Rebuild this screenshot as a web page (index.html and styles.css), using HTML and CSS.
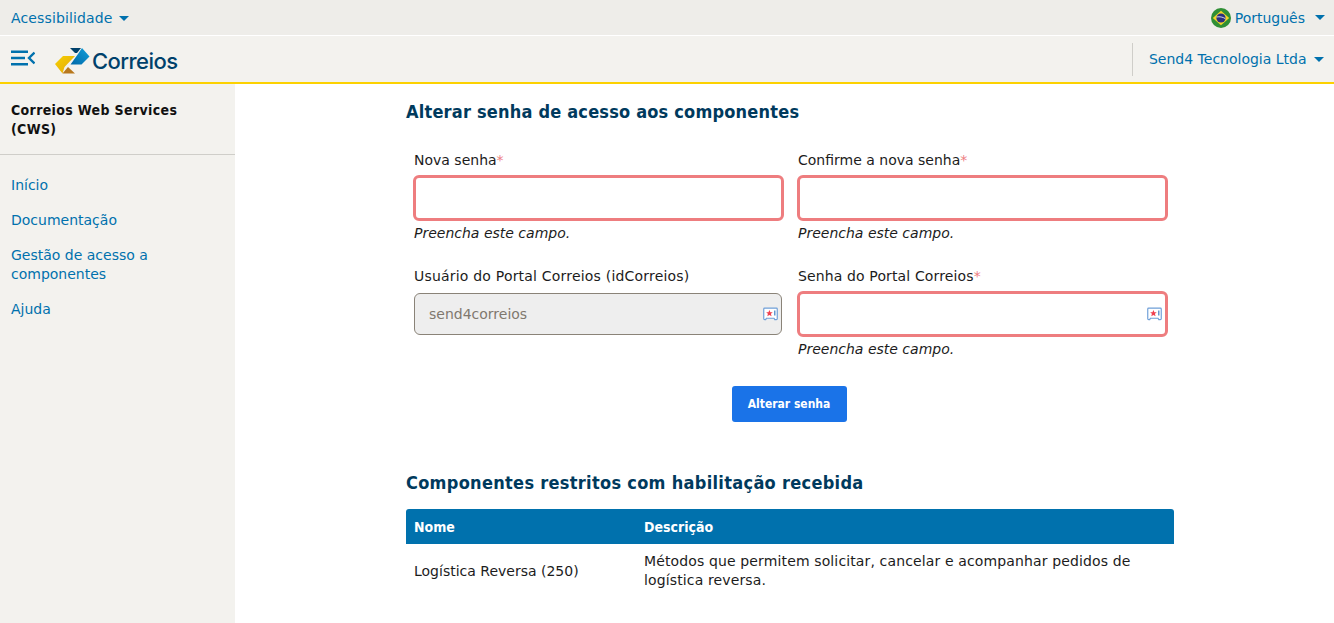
FILE: index.html
```html
<!DOCTYPE html>
<html lang="pt-BR">
<head>
<meta charset="utf-8">
<title>Correios Web Services</title>
<link rel="stylesheet" href="styles.css">
</head>
<body>
<div class="topbar">
  <a class="link top-link">Acessibilidade <span class="caret"></span></a>
  <a class="link lang">
    <svg class="flag" width="20" height="20" viewBox="0 0 20 20"><circle cx="10" cy="10" r="10" fill="#2f8f35"/><path d="M10 2.800 18.200 10 10 17.200 1.800 10z" fill="#f5d327"/><circle cx="10" cy="10" r="4.600" fill="#2b2f7e"/><path d="M5.600 9c3-.6 6.200 0 8.700 1.600" stroke="#fff" stroke-width=".8" fill="none"/></svg>
    Português <span class="caret caret-far"></span>
  </a>
</div>
<header class="header">
  <svg class="menu" width="24" height="16" viewBox="0 0 24 16"><g fill="none" stroke="#0071ad" stroke-width="2.400"><path d="M0 1.800H17M0 8H14M0 14.200H17"/><path d="M23.500 2.500 18 8l5.500 5.500"/></g></svg>
  <svg class="mark" width="35" height="28" viewBox="0 0 35 28">
    <defs>
      <linearGradient id="gy" x1="0" y1="0" x2="1" y2="1"><stop offset="0" stop-color="#f6d000"/><stop offset="1" stop-color="#e3a70f"/></linearGradient>
      <linearGradient id="gb" x1="1" y1="0" x2="0" y2="1"><stop offset="0" stop-color="#12a0da"/><stop offset="1" stop-color="#0068a8"/></linearGradient>
    </defs>
    <path d="M15 1H26L22 6H20z" fill="#00416b"/>
    <path d="M27 1 34.500 9.500 26.500 17.500H15.500L23 7z" fill="url(#gb)"/>
    <path d="M0 17 8 9H20L9.500 20 7.500 26.500z" fill="url(#gy)"/>
    <path d="M7.500 26.500 13 20l7 6.500z" fill="#b8781c"/>
  </svg>
  <span class="brand">Correios</span>
  <div class="account"><a class="link">Send4 Tecnologia Ltda <span class="caret"></span></a></div>
</header>
<div class="page">
  <aside class="sidebar">
    <div class="side-title">Correios Web Services (CWS)</div>
    <nav class="side-nav">
      <a class="link">Início</a>
      <a class="link">Documentação</a>
      <a class="link">Gestão de acesso a componentes</a>
      <a class="link">Ajuda</a>
    </nav>
  </aside>
  <main class="main">
    <h2 class="heading">Alterar senha de acesso aos componentes</h2>
    <form class="form">
      <div class="field">
        <label class="label">Nova senha<span class="req">*</span></label>
        <div class="input invalid"></div>
        <div class="error">Preencha este campo.</div>
      </div>
      <div class="field">
        <label class="label">Confirme a nova senha<span class="req">*</span></label>
        <div class="input invalid"></div>
        <div class="error">Preencha este campo.</div>
      </div>
      <div class="field">
        <label class="label label-wide">Usuário do Portal Correios (idCorreios)</label>
        <div class="input disabled">send4correios
          <svg class="key" width="15" height="15" viewBox="0 0 14 14"><use href="#keyicon"/></svg>
        </div>
      </div>
      <div class="field">
        <label class="label label-wide-s">Senha do Portal Correios<span class="req">*</span></label>
        <div class="input invalid">
          <svg class="key" width="15" height="15" viewBox="0 0 14 14"><use href="#keyicon"/></svg>
        </div>
        <div class="error">Preencha este campo.</div>
      </div>
    </form>
    <div class="actions"><button class="btn" type="button">Alterar senha</button></div>
    <h2 class="heading second">Componentes restritos com habilitação recebida</h2>
    <table class="table">
      <thead><tr><th class="col1">Nome</th><th>Descrição</th></tr></thead>
      <tbody><tr><td>Logística Reversa (250)</td><td class="desc">Métodos que permitem solicitar, cancelar e acompanhar pedidos de logística reversa.</td></tr></tbody>
    </table>
  </main>
</div>
<svg width="0" height="0" class="defs"><defs><g id="keyicon"><path d="M1.500 1h11a.8.8 0 0 1 .8.8v9.200a.8.8 0 0 1-.8.800h-1.500l-.7-1.300H3.200l-.7 1.300H1.500a.8.8 0 0 1-.8-.8V1.800a.8.8 0 0 1 .8-.8z" fill="#fff" stroke="#6f9fd8" stroke-width="1.100"/><path d="M6 2.800l.9 2.100 2.200.1-1.700 1.400.6 2.200L6 7.400 4 8.600l.6-2.200L2.900 5l2.200-.1z" fill="#f0404f"/><path d="M11 3.200v4.800" stroke="#4a86c8" stroke-width="1.200"/></g></defs></svg>
</body>
</html>
```
FILE: styles.css
```css
* { box-sizing: border-box; }
html, body { margin: 0; height: 100%; }
body { font-family: "DejaVu Sans", sans-serif; font-size: 14px; color: #1c1c1c; background: #fff; overflow: hidden; }
.link { color: #0071ad; text-decoration: none; }
.top-link { letter-spacing: .14px; }
.caret { display: inline-block; width: 0; height: 0; border-left: 5px solid transparent; border-right: 5px solid transparent; border-top: 5px solid #0071ad; margin-left: 2px; vertical-align: 2px; }
.caret-far { margin-left: 6px; }
.account .caret { margin-left: 3px; }
.topbar { height: 36px; background: #eeede9; border-bottom: 1px solid #fff; display: flex; justify-content: space-between; align-items: center; padding: 0 9px 0 11px; }
.lang { display: flex; align-items: center; gap: 4px; }
.flag { flex: none; }
.header { height: 48px; background: #f3f2ee; border-bottom: 2px solid #fcd100; display: flex; align-items: center; padding-left: 11px; }
.menu { flex: none; margin-right: 20px; margin-bottom: 2px; }
.mark { flex: none; margin-top: 3px; }
.brand { font-family: "Inter", sans-serif; font-size: 22px; font-weight: 500; color: #00416b; margin: 4px 0 0 2px; letter-spacing: -.55px; }
.account { margin-left: auto; height: 33px; border-left: 1px solid #cfcec9; padding: 0 9px 0 16px; display: flex; align-items: center; margin-right: 1px; }
.page { display: flex; height: 539px; }
.sidebar { width: 235px; flex: none; background: #f3f2ee; }
.side-title { font-family: "DejaVu Sans Condensed", "DejaVu Sans", sans-serif; font-weight: 700; letter-spacing: .35px; line-height: 19px; padding: 17px 11px 15px; border-bottom: 1px solid #cfcec9; color: #111; }
.side-nav { display: flex; flex-direction: column; gap: 16px; padding: 21px 11px; line-height: 19px; }
.main { width: 768px; margin-left: 171px; }
.heading { margin: 0; font-family: "DejaVu Sans Condensed", "DejaVu Sans", sans-serif; font-size: 18px; letter-spacing: .2px; line-height: 24px; font-weight: 700; color: #003a5d; padding-top: 16px; }
.heading.second { padding-top: 0; margin-top: 49px; letter-spacing: .3px; }
.form { display: grid; grid-template-columns: 1fr 1fr; margin-top: 25px; }
.field { padding: 0 8px; height: 116px; }
.label { display: block; line-height: 19px; margin-bottom: 7px; margin-top: 2px; }
.label-wide { letter-spacing: .2px; }
.label-wide-s { letter-spacing: .13px; }
.req { color: #ee7d7f; }
.input { height: 42px; border-radius: 6px; background: #fff; position: relative; display: flex; align-items: center; padding-left: 15px; }
.invalid { border: 3px solid #ee7d7f; height: 46px; margin: -2px -1.5px 0; }
.disabled { border: 1px solid #8a8378; background: #eeeeee; color: #80786e; padding-left: 14px; }
.key { position: absolute; right: 3px; top: 50%; margin-top: -7px; }
.invalid .key { right: 2.5px; }
.error { font-style: italic; line-height: 19px; margin-top: 3px; }
.actions { display: flex; justify-content: center; margin-top: 5px; padding-right: 2px; }
.btn { width: 115px; height: 36px; background: #1a73e8; border: 0; border-radius: 3px; color: #fff; font: 700 12px "DejaVu Sans Condensed", "DejaVu Sans", sans-serif; }
.table { width: 100%; border-collapse: collapse; margin-top: 14px; }
.table th { background: #0071ad; color: #fff; text-align: left; font-family: "DejaVu Sans Condensed", "DejaVu Sans", sans-serif; font-weight: 700; height: 35px; padding: 0 8px; }
.table th:first-child { border-top-left-radius: 3px; }
.table th:last-child { border-top-right-radius: 3px; }
.col1 { width: 230px; }
.table td { padding: 8px; line-height: 19px; }
.desc { letter-spacing: .13px; }
.defs { position: absolute; }
```
